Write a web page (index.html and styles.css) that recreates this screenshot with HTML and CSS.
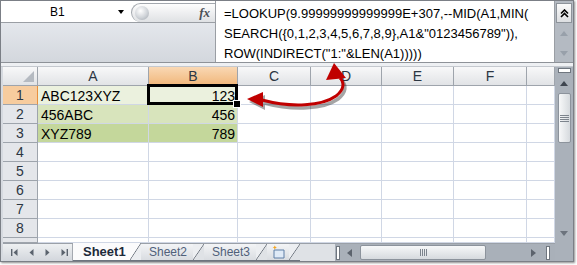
FILE: index.html
```html
<!DOCTYPE html>
<html lang="en">
<head>
    <meta charset="UTF-8">
    <title>Extract number from text</title>
    <link rel="stylesheet" href="styles.css">
</head>
<body>

    <div class="window">

        <!-- Name box + formula bar -->
        <div class="formula-area">
            <div class="name-side">
                <div class="name-row">
                    <div class="name-box">
                        <span class="ref">B1</span>
                        <span class="drop"></span>
                    </div>
                    <div class="fx-pill">
                        <span class="ball"></span>
                        <span class="fx">fx</span>
                    </div>
                </div>
                <div class="name-fill"></div>
            </div>
            <div class="formula-text">
                <div>=LOOKUP(9.99999999999999E+307,--MID(A1,MIN(</div>
                <div>SEARCH({0,1,2,3,4,5,6,7,8,9},A1&amp;"0123456789")),</div>
                <div>ROW(INDIRECT("1:"&amp;LEN(A1)))))</div>
            </div>
            <div class="formula-scroll">
                <div class="collapse-btn">
                    <svg width="9" height="9" viewBox="0 0 9 9"><path d="M1 4.5 L4.5 1 L8 4.5 M1 8 L4.5 4.5 L8 8" fill="none" stroke="#000" stroke-width="1.6"/></svg>
                </div>
                <span class="tri up pale"></span>
                <span class="tri down pale"></span>
            </div>
        </div>

        <div class="splitter"></div>

        <!-- Sheet -->
        <div class="sheet-area">
            <div class="sheet-main">
                <div class="grid">
                    <div class="corner"><span class="corner-mark"></span></div>
                    <div class="col-head">A</div>
                    <div class="col-head selected">B</div>
                    <div class="col-head">C</div>
                    <div class="col-head">D</div>
                    <div class="col-head">E</div>
                    <div class="col-head">F</div>
                    <div class="col-head"></div>

                    <div class="row-head selected">1</div>
                    <div class="cell green-1">ABC123XYZ</div>
                    <div class="cell green-1 num active">123</div>
                    <div class="cell"></div><div class="cell"></div><div class="cell"></div><div class="cell"></div><div class="cell"></div>

                    <div class="row-head">2</div>
                    <div class="cell green-2">456ABC</div>
                    <div class="cell green-2 num">456</div>
                    <div class="cell"></div><div class="cell"></div><div class="cell"></div><div class="cell"></div><div class="cell"></div>

                    <div class="row-head">3</div>
                    <div class="cell green-3">XYZ789</div>
                    <div class="cell green-3 num">789</div>
                    <div class="cell"></div><div class="cell"></div><div class="cell"></div><div class="cell"></div><div class="cell"></div>

                    <div class="row-head">4</div>
                    <div class="cell"></div><div class="cell"></div><div class="cell"></div><div class="cell"></div><div class="cell"></div><div class="cell"></div><div class="cell"></div>
                    <div class="row-head">5</div>
                    <div class="cell"></div><div class="cell"></div><div class="cell"></div><div class="cell"></div><div class="cell"></div><div class="cell"></div><div class="cell"></div>
                    <div class="row-head">6</div>
                    <div class="cell"></div><div class="cell"></div><div class="cell"></div><div class="cell"></div><div class="cell"></div><div class="cell"></div><div class="cell"></div>
                    <div class="row-head">7</div>
                    <div class="cell"></div><div class="cell"></div><div class="cell"></div><div class="cell"></div><div class="cell"></div><div class="cell"></div><div class="cell"></div>
                    <div class="row-head">8</div>
                    <div class="cell"></div><div class="cell"></div><div class="cell"></div><div class="cell"></div><div class="cell"></div><div class="cell"></div><div class="cell"></div>
                    <div class="row-head"></div>
                    <div class="cell"></div><div class="cell"></div><div class="cell"></div><div class="cell"></div><div class="cell"></div><div class="cell"></div><div class="cell"></div>
                </div>

                <!-- Sheet tabs + horizontal scroll -->
                <div class="tab-bar">
                    <div class="tab-nav">
                        <svg width="7" height="7" viewBox="0 0 7 7"><rect x="0" y="0" width="1.4" height="7" fill="#5b636e"/><path d="M2.5 3.5 L6.5 0 V7 Z" fill="#5b636e"/></svg>
                        <svg width="5" height="7" viewBox="0 0 5 7"><path d="M0.5 3.5 L4.5 0 V7 Z" fill="#5b636e"/></svg>
                        <svg width="5" height="7" viewBox="0 0 5 7"><path d="M4.5 3.5 L0.5 0 V7 Z" fill="#5b636e"/></svg>
                        <svg width="7" height="7" viewBox="0 0 7 7"><path d="M4.5 3.5 L0.5 0 V7 Z" fill="#5b636e"/><rect x="5.6" y="0" width="1.4" height="7" fill="#5b636e"/></svg>
                    </div>
                    <div class="tabs">
                        <div class="tab active">Sheet1</div>
                        <span class="slash first"></span>
                        <div class="tab">Sheet2</div>
                        <span class="slash"></span>
                        <div class="tab">Sheet3</div>
                        <span class="slash"></span>
                        <div class="tab new-sheet">
                            <svg width="16" height="14" viewBox="0 0 16 14">
                                <path d="M4 5 H14 V13 H4 Z" fill="#dfeaf7" stroke="#5f7ea6" stroke-width="1"/>
                                <path d="M4 2 L4.8 0.5 L5.6 2 L7 2.4 L5.6 3 L4.8 4.6 L4 3 L2.6 2.4 Z" fill="#f6a41b"/>
                            </svg>
                        </div>
                        <span class="slash"></span>
                    </div>
                    <div class="hscroll">
                        <span class="grip-bar"></span>
                        <span class="tri left"></span>
                        <div class="h-thumb"><span class="grip-lines v"></span></div>
                        <span class="tri right"></span>
                        <span class="grip-bar"></span>
                    </div>
                </div>
            </div>

            <div class="vscroll">
                <span class="split-box"></span>
                <span class="tri up"></span>
                <div class="v-thumb"><span class="grip-lines h"></span></div>
                <span class="tri down pale-dark"></span>
            </div>
        </div>
    </div>

    <!-- Red callout arrow from formula to cell -->
    <svg class="callout" width="577" height="265" viewBox="0 0 577 265">
        <g transform="translate(2,3)" opacity="0.35">
            <path d="M262 100 C292 108 322 106 336 96 C345 89 344 82 340 78" fill="none" stroke="#000" stroke-width="3.5"/>
            <path d="M247 99 L263 92 L263 107 Z" fill="#000"/>
        </g>
        <path d="M262 100 C292 108 322 106 336 96 C345 89 344 82 340 78" fill="none" stroke="#c00000" stroke-width="3"/>
        <path d="M247 99 L263 92 L263 107 Z" fill="#c00000"/>
        <path d="M334 63 L326 80 L346 78 Z" fill="#c00000"/>
    </svg>

</body>
</html>
```

FILE: styles.css
```css
/* Basic reset */
* {
    margin: 0;
    padding: 0;
    box-sizing: border-box;
}

body {
    position: relative;
    width: 577px;
    height: 265px;
    overflow: hidden;
    background: #fff;
    font-family: "Liberation Sans", Arial, sans-serif;
    color: #000;
}

.window {
    display: flex;
    flex-direction: column;
    width: 574px;
    height: 262px;
    border: 1px solid #7b7f86;
    box-shadow: 1px 1px 2px rgba(0, 0, 0, 0.45);
    background: #dfe2e7;
}

/* Formula bar */
.formula-area {
    display: flex;
    height: 62px;
    border-bottom: 1px solid #8e9298;
}

.name-side {
    display: flex;
    flex-direction: column;
    width: 214px;
}

.name-row {
    display: flex;
    height: 22px;
    background: #fff;
    border-bottom: 1px solid #9a9ea4;
}

.name-box {
    display: flex;
    align-items: center;
    width: 130px;
    padding-left: 49px;
    font-size: 12px;
}

.drop {
    margin-left: auto;
    margin-right: 7px;
    border-left: 3.5px solid transparent;
    border-right: 3.5px solid transparent;
    border-top: 4px solid #000;
}

.fx-pill {
    display: flex;
    align-items: center;
    flex: 1;
    margin-top: 2px;
    padding-left: 3px;
    border: 1px solid #a3a8ae;
    border-right: none;
    border-bottom: none;
    border-radius: 10px 0 0 10px;
    background: linear-gradient(#fdfdfd, #dfe1e4);
}

.ball {
    width: 14px;
    height: 14px;
    border-radius: 50%;
    background: radial-gradient(circle at 40% 35%, #fff, #cfd3d8 55%, #9ea4ab);
}

.fx {
    margin-left: auto;
    margin-right: 5px;
    font-family: "Liberation Serif", serif;
    font-style: italic;
    font-weight: bold;
    font-size: 13px;
    color: #4a4f56;
}

.name-fill {
    flex: 1;
    background: linear-gradient(#e4e7ec, #d3d7dd);
}

.formula-text {
    width: 340px;
    padding: 3px 0 0 8px;
    border-left: 1px solid #9a9ea4;
    border-right: 1px solid #9a9ea4;
    background: #fff;
    font-size: 13px;
    line-height: 20px;
    white-space: nowrap;
}

.formula-scroll {
    display: flex;
    flex-direction: column;
    align-items: center;
    flex: 1;
    padding-top: 2px;
    background: #b4bac2;
}

.collapse-btn {
    display: flex;
    align-items: center;
    justify-content: center;
    width: 16px;
    height: 20px;
    border: 1px solid #8d939a;
    background: linear-gradient(#fbfbfb, #dcdee1);
}

.formula-scroll .tri.up {
    margin-top: 8px;
}

.formula-scroll .tri.down {
    margin-top: 15px;
}

/* Arrows used in scroll bars */
.tri {
    width: 0;
    height: 0;
}

.tri.up {
    border-left: 4px solid transparent;
    border-right: 4px solid transparent;
    border-bottom: 5px solid #3f4650;
}

.tri.down {
    border-left: 4px solid transparent;
    border-right: 4px solid transparent;
    border-top: 5px solid #3f4650;
}

.tri.left {
    border-top: 4px solid transparent;
    border-bottom: 4px solid transparent;
    border-right: 5px solid #5c636d;
}

.tri.right {
    border-top: 4px solid transparent;
    border-bottom: 4px solid transparent;
    border-left: 5px solid #5c636d;
}

.tri.up.pale {
    border-bottom-color: #98a0aa;
}

.tri.down.pale {
    border-top-color: #98a0aa;
}

.tri.down.pale-dark {
    border-top-color: #6c737d;
}

.splitter {
    height: 4px;
    background: #eef0f3;
    border-bottom: 1px solid #c4c8ce;
}

/* Sheet */
.sheet-area {
    display: flex;
    flex: 1;
    padding-left: 2px;
    background: #d6dae0;
}

.sheet-main {
    display: flex;
    flex-direction: column;
    width: 552px;
}

.grid {
    display: grid;
    grid-template-columns: 35px 111px 89px 73px 71px 72px 73px 28px;
    grid-template-rows: repeat(9, 19px) 5px;
    overflow: hidden;
    background: #fff;
}

.corner,
.col-head,
.row-head {
    border-right: 1px solid #9ea4ac;
    border-bottom: 1px solid #9ea4ac;
    background: linear-gradient(#f8f8f9, #e1e3e6);
    color: #2c3642;
}

.corner {
    display: flex;
    align-items: flex-end;
    justify-content: flex-end;
    padding: 0 3px 3px 0;
}

.corner-mark {
    width: 0;
    height: 0;
    border-left: 11px solid transparent;
    border-bottom: 11px solid #b5bac1;
}

.col-head {
    text-align: center;
    font-size: 14px;
    line-height: 19px;
}

.row-head {
    text-align: center;
    font-size: 14px;
    line-height: 18px;
    background: #e4e6ea;
}

.col-head.selected {
    background: linear-gradient(#f9d8b4, #f1b77b);
    border-bottom-color: #e98f3c;
}

.row-head.selected {
    background: #f7cc9e;
    border-right-color: #e98f3c;
}

.cell {
    padding: 2px 3px 0;
    border-right: 1px solid #d0d7e5;
    border-bottom: 1px solid #d0d7e5;
    font-size: 14px;
    line-height: 16px;
    white-space: nowrap;
}

.cell.num {
    text-align: right;
    padding-right: 2px;
}

.green-1 {
    background: #ebf1de;
}

.green-2 {
    background: #d8e4bc;
}

.green-3 {
    background: #c4d79b;
}

/* Active cell outline and fill handle */
.cell.active {
    position: relative;
}

.cell.active::before {
    content: "";
    position: absolute;
    top: -2px;
    left: -2px;
    right: -1px;
    bottom: -1px;
    border: 3px solid #000;
}

.cell.active::after {
    content: "";
    position: absolute;
    right: -4px;
    bottom: -4px;
    width: 6px;
    height: 6px;
    background: #000;
    border: 1px solid #fff;
}

/* Tabs */
.tab-bar {
    display: flex;
    height: 18px;
    border-top: 1px solid #9aa0a8;
    background: #dfe2e6;
}

.tab-nav {
    display: flex;
    align-items: center;
    gap: 11px;
    width: 70px;
    padding-left: 8px;
    border-right: 1px solid #a4a9b0;
    background: linear-gradient(#eef0f2, #d2d6dc);
}

.tabs {
    display: flex;
    width: 262px;
}

.tab {
    padding: 0 0 0 8px;
    font-size: 12px;
    line-height: 16px;
    color: #50607a;
    background: linear-gradient(#f3f4f6, #d9dce1);
    border-bottom: 1px solid #6d747e;
}

.tab.active {
    width: 57px;
    padding-left: 10px;
    margin-top: -1px;
    font-weight: bold;
    font-size: 13px;
    line-height: 17px;
    color: #1d2a3a;
    background: #fbfbfc;
}

.tab:nth-of-type(2),
.tab:nth-of-type(3) {
    width: 52px;
}

.tab.new-sheet {
    display: flex;
    align-items: center;
    width: 22px;
    padding-left: 3px;
}

.slash {
    width: 11px;
    border-bottom: 1px solid #6d747e;
    background:
        linear-gradient(to top left, transparent calc(50% - 0.7px), #6d747e 50%, transparent calc(50% + 0.7px)),
        linear-gradient(to bottom right, #eceef1 50%, #dfe2e6 50%);
}

.slash.first {
    margin-top: -1px;
    background:
        linear-gradient(to top left, transparent calc(50% - 0.7px), #6d747e 50%, transparent calc(50% + 0.7px)),
        linear-gradient(to bottom right, #fbfbfc 50%, #eceef1 50%);
}

.hscroll {
    display: flex;
    align-items: center;
    width: 220px;
    background: #a9b0b9;
}

.grip-bar {
    width: 4px;
    height: 14px;
    margin: 0 1px;
    border: 1px solid #6f767f;
    background: #fff;
}

.hscroll .tri.left {
    margin-left: 6px;
}

.h-thumb {
    display: flex;
    align-items: center;
    justify-content: center;
    width: 126px;
    height: 15px;
    margin: 0 45px 0 8px;
    border: 1px solid #8c939c;
    border-radius: 2px;
    background: linear-gradient(#f7f8f9, #d6dade);
}

.hscroll .tri.right {
    margin-right: 9px;
}

.grip-lines.v {
    width: 7px;
    height: 7px;
    background: repeating-linear-gradient(to right, #7d848d 0 1px, transparent 1px 2px);
}

.grip-lines.h {
    width: 9px;
    height: 7px;
    background: repeating-linear-gradient(to bottom, #7d848d 0 1px, transparent 1px 2px);
}

/* Vertical scroll bar */
.vscroll {
    display: flex;
    flex-direction: column;
    align-items: center;
    flex: 1;
    background: #aab1ba;
}

.split-box {
    width: 13px;
    height: 5px;
    margin-top: 1px;
    border: 1px solid #6f767f;
    background: #fff;
}

.vscroll .tri.up {
    margin-top: 8px;
}

.v-thumb {
    display: flex;
    align-items: center;
    justify-content: center;
    width: 13px;
    height: 50px;
    margin-top: 7px;
    border: 1px solid #8c939c;
    border-radius: 2px;
    background: linear-gradient(to right, #f7f8f9, #d6dade);
}

.vscroll .tri.down {
    margin-top: auto;
    margin-bottom: 25px;
}

/* Callout arrow */
.callout {
    position: absolute;
    top: 0;
    left: 0;
    pointer-events: none;
}
```
